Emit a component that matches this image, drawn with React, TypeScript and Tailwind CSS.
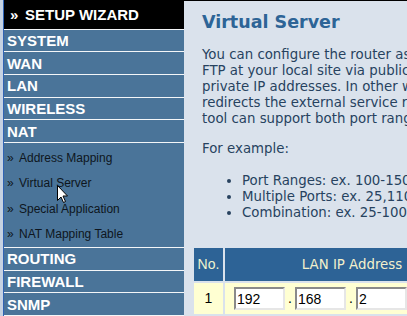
const menuTop = ['SYSTEM', 'WAN', 'LAN', 'WIRELESS', 'NAT'];
const menuBottom = ['ROUTING', 'FIREWALL', 'SNMP'];
const natItems = ['Address Mapping', 'Virtual Server', 'Special Application', 'NAT Mapping Table'];

const intro = [
  'You can configure the router as a Virtual Server allowing remote users to access services such as Web or',
  'FTP at your local site via public IP addresses that can be automatically redirected to local servers configured with',
  'private IP addresses. In other words, depending on the requested service (TCP/UDP port number), the router',
  'redirects the external service request to the appropriate server (located at another internal IP address). This',
  'tool can support both port ranges, multiple ports, and combinations of the two.',
];

const examples = [
  'Port Ranges: ex. 100-150',
  'Multiple Ports: ex. 25,110,80',
  'Combination: ex. 25-100,80',
];

function MenuHeading({ label }: { label: string }) {
  return (
    <div className="flex h-[23px] items-center border-b border-[#f4f6f8] pl-[3px] text-[15px] font-bold leading-none text-white">
      {label}
    </div>
  );
}

function IpBox({ value }: { value: string }) {
  return (
    <div className="flex h-[23px] w-[51px] items-center border-2 border-t-[#8a8a8a] border-l-[#8a8a8a] border-r-[#e6e6e6] border-b-[#e6e6e6] bg-white pl-[1px] text-[14px] leading-none text-black">
      {value}
    </div>
  );
}

function Cursor() {
  return (
    <svg className="absolute left-[57px] top-[185px]" width="12" height="19" viewBox="0 0 12 19">
      <path
        d="M0.5 0.5 L0.5 15.5 L4 12 L6.5 17.5 L8.5 16.5 L6 11 L10.5 11 Z"
        fill="white"
        stroke="black"
        strokeWidth="1"
      />
    </svg>
  );
}

export default function App() {
  return (
    <div className="relative flex h-[316px] w-[407px] overflow-hidden bg-[#dae2ec]">
      <div className="w-[3px] shrink-0 bg-[#c5d2e2]" />
      <nav className="flex w-[181px] shrink-0 flex-col border-l border-[#2f63b5] bg-[#4a7499] font-['Liberation_Sans',Arial,sans-serif]">
        <div className="flex h-[30px] items-center border-b border-[#f4f6f8] bg-black pl-[6px] text-[15px] font-bold leading-none text-white">
          <span className="w-[15px]">»</span>
          SETUP WIZARD
        </div>
        {menuTop.map((m) => (
          <MenuHeading key={m} label={m} />
        ))}
        <div className="flex h-[105px] flex-col border-b border-[#f4f6f8] pt-[2px]">
          {natItems.map((item) => (
            <div key={item} className="flex h-[26px] items-center pl-[3px] text-[12px] leading-none text-[#0e1620]">
              <span className="w-[12px]">»</span>
              {item}
            </div>
          ))}
        </div>
        {menuBottom.map((m) => (
          <MenuHeading key={m} label={m} />
        ))}
      </nav>

      <main className="flex-1 border-t border-black font-['DejaVu_Sans',Verdana,sans-serif]">
        <div className="pl-[18px] pt-[11px]">
          <h1 className="whitespace-nowrap text-[17.5px] font-bold leading-[20px] text-[#2d6496]">Virtual Server</h1>
          <div className="mt-[15px] text-[13.33px] leading-[16px] text-[#27425f]">
            {intro.map((line) => (
              <div key={line} className="whitespace-nowrap">
                {line}
              </div>
            ))}
            <div className="mt-[14px]">For example:</div>
            <ul className="mt-[16px] list-disc pl-10">
              {examples.map((e) => (
                <li key={e} className="whitespace-nowrap">
                  {e}
                </li>
              ))}
            </ul>
          </div>
        </div>

        <div className="ml-[10px] mt-[27px] flex w-[400px] flex-col gap-[2px]">
          <div className="flex h-[33px] gap-[2px]">
            <div className="flex w-[29px] items-center justify-center bg-[#2d6396] font-['Liberation_Sans',Arial,sans-serif] text-[14px] text-[#eef4cf]">
              No.
            </div>
            <div className="flex w-[254px] items-center justify-center bg-[#2d6396] text-[13.33px] text-[#f3f0cc]">
              LAN IP Address
            </div>
          </div>
          <div className="flex h-[31px] gap-[2px] font-['Liberation_Sans',Arial,sans-serif]">
            <div className="flex w-[29px] items-center justify-center bg-[#ffffd2] text-[14px] text-black">1</div>
            <div className="flex w-[254px] items-center bg-[#ffffd2] pl-[9px] text-[14px] text-black">
              <IpBox value="192" />
              <span className="w-[10px] text-center">.</span>
              <IpBox value="168" />
              <span className="w-[10px] text-center">.</span>
              <IpBox value="2" />
            </div>
          </div>
          <div className="flex h-[31px] gap-[2px]">
            <div className="w-[29px] bg-[#ffffd2]" />
            <div className="w-[254px] bg-[#ffffd2]" />
          </div>
        </div>
      </main>
      <Cursor />
    </div>
  );
}
